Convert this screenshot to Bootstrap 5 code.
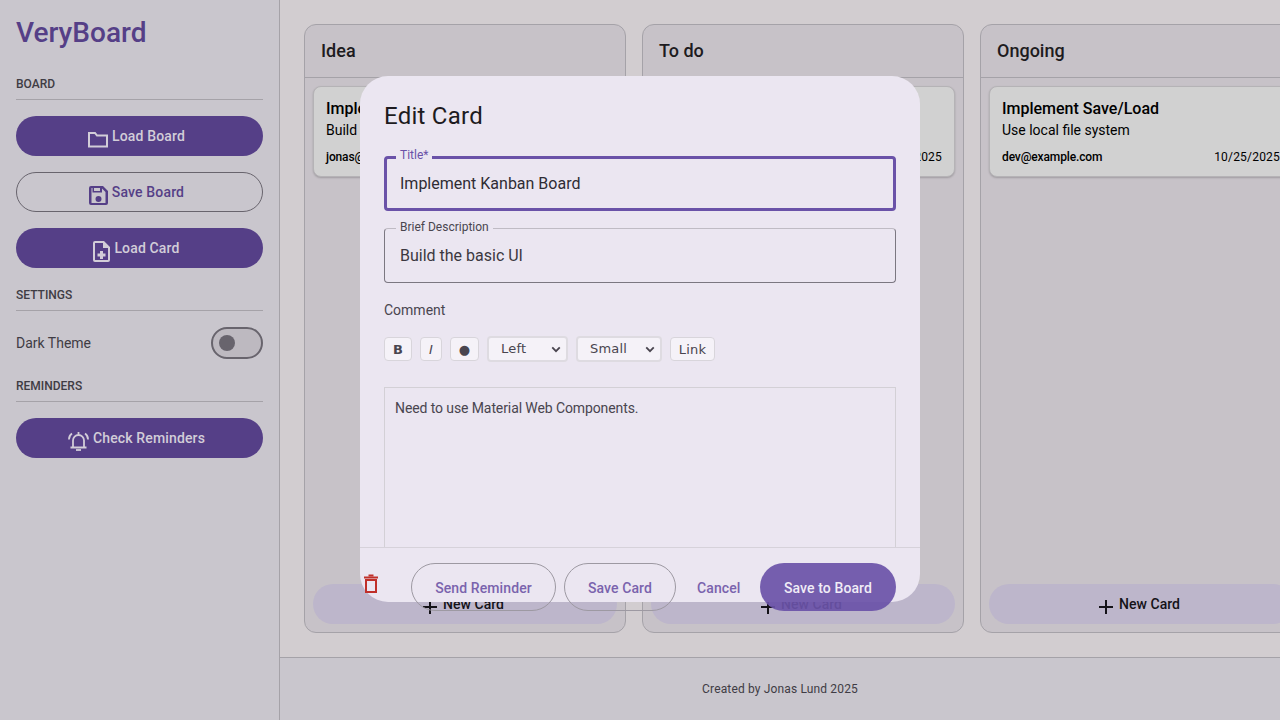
<!DOCTYPE html>
<html lang="en">
<head>
<meta charset="utf-8">
<title>VeryBoard</title>
<link href="https://cdn.jsdelivr.net/npm/bootstrap@5.3.0/dist/css/bootstrap.min.css" rel="stylesheet">
<style>
html,body{height:720px;overflow:hidden;margin:0}
body{font-family:Roboto,"Liberation Sans",sans-serif;background:#d2cdd0;color:#1d1b20}
.vb-shell{height:720px;position:relative;overflow:hidden}
.vb-side{width:280px;flex:none;background:#c9c6cd;border-right:1px solid #a5a2a8;padding:16px}
.vb-brand{font-size:28px;font-weight:500;line-height:33px;color:#553f87;margin:0 0 27px}
.vb-head{font-size:12px;font-weight:500;line-height:16px;color:#3f3c44;text-transform:uppercase;border-bottom:1px solid #a5a2a8;padding-bottom:7px;margin:19px 0 16px}
.vb-pill{height:40px;width:100%;border-radius:20px;font-size:14px;font-weight:500;line-height:20px;padding:0 6px 0 0;margin-bottom:16px;gap:4px;letter-spacing:.15px}
.vb-pill svg{margin-top:6px;flex:none}
.vb-fill,.vb-fill:hover{background:#553f87;color:#d2cdd8;border:0}
.vb-line,.vb-line:hover{background:transparent;color:#553f87;border:1px solid #68646d}
.vb-row{height:32px;margin:0 0 16px;font-size:14px;color:#3f3c44}
.vb-toggle{width:52px;height:32px;border:2px solid #68646d;border-radius:16px;background:#bdb9c0;padding-left:6px}
.vb-thumb{width:16px;height:16px;border-radius:50%;background:#68646d}
.vb-main{min-width:0;flex:1}
.vb-board{flex:1;min-height:0;padding:24px;gap:16px;overflow:hidden;height:657px}
.vb-col{width:322px;flex:none;height:609px;background:#c7c2c8;border:1px solid #a5a2a8;border-radius:12px}
.vb-colhead{height:53px;border-bottom:1px solid #a5a2a8;padding:0 16px;font-size:18px;font-weight:500;line-height:52px;color:#1d1b20}
.vb-cards{padding:8px;flex:1}
.vb-task{height:91px;background:#d1d1d1;border:1px solid #b5b3b6;border-radius:8px;padding:12px 12px 0;box-shadow:0 1px 2px rgba(0,0,0,.2);color:#000}
.vb-tasktitle{font-size:16px;font-weight:500;line-height:20px}
.vb-taskdesc{font-size:14px;line-height:20px;margin-top:1px}
.vb-taskmeta{font-size:12px;line-height:16px;margin-top:9px;letter-spacing:.2px}
.vb-taskmeta b{font-weight:500;letter-spacing:-.13px}
.vb-new,.vb-new:hover{height:40px;margin:0 8px 8px;width:304px;border:0;border-radius:20px;background:#bdb6cb;color:#141218;font-size:14px;font-weight:500;line-height:20px;padding:0 4px 0 0;gap:5px;letter-spacing:.05px}
.vb-new svg{margin-top:5px}
.vb-foot{height:63px;background:#c9c6cd;border-top:1px solid #a5a2a8;font-size:12px;color:#3f3c44;padding-top:23px;line-height:16px;letter-spacing:.15px}
.vb-dialog{position:absolute;left:360px;top:76px;width:560px;height:526px;background:#ebe6f1;border-radius:28px}
.vb-dbody{height:472px;overflow:hidden;padding:24px;border-bottom:1px solid #d6d2da}
.vb-dtitle{font-size:24px;font-weight:400;line-height:32px;color:#1d1b20;margin:0 0 24px;letter-spacing:.25px}
.vb-field{position:relative;height:55px;border:1px solid #7b7781;border-top-color:#bfbbc4;border-radius:4px;padding:0 15px;font-size:16px;line-height:53px;color:#3b3840;margin-bottom:17px}
.vb-field.vb-on{border:3px solid #6a52a8;padding:0 13px;line-height:49px;color:#2f2c34}
.vb-float{position:absolute;left:11px;top:-10px;background:#ebe6f1;padding:0 4px;font-size:12px;line-height:16px;color:#49454f}
.vb-on .vb-float{left:9px;top:-12px;color:#6a52a8}
.vb-label{font-size:14px;line-height:20px;color:#49454f;margin:0 0 16px}
.vb-tools{gap:8px;margin-bottom:25px;height:26px;align-items:center}
.vb-tool{height:24px;padding:0;background-color:#f5f2f8;border:1px solid #d8d5db;border-radius:4px;font-family:"DejaVu Sans",sans-serif;font-size:13px;color:#49454f;line-height:23px;letter-spacing:.2px}
.vb-tool.btn:hover{background-color:#f5f2f8;color:#49454f;border-color:#d8d5db}
select.vb-tool{height:26px;line-height:22px;padding:0 0 0 12px;background-image:url("data:image/svg+xml,%3csvg xmlns='http://www.w3.org/2000/svg' viewBox='0 0 12 8'%3e%3cpath fill='none' stroke='%2349454f' stroke-width='2.200' d='M1.500 1.500 6 6l4.500-4.500'/%3e%3c/svg%3e");background-position:right 5px center;background-size:10px 7px;border-width:2px;border-color:#dedbe1;color:#49454f}
.vb-text{display:block;width:100%;height:220px;background:#ebe6f1;border:1px solid #d3d0d6;border-radius:0;padding:10px;font-size:14px;line-height:20px;color:#49454f;resize:none;letter-spacing:-.1px}
.vb-text:focus{background:#ebe6f1;box-shadow:none;border-color:#d3d0d6;color:#49454f}
.vb-dfoot{height:54px;padding:15px 24px 0 0;overflow:visible}
.vb-trash{margin:11px 0 0 2px;flex:none}
.vb-act,.vb-act:hover{height:48px;border-radius:24px;padding:0;font-size:14px;font-weight:500;line-height:20px;color:#7a63ad;background:transparent;border:1px solid #9d99a2;letter-spacing:.1px}
.vb-act span{position:relative;top:1px}
.vb-flat,.vb-flat:hover{border-color:transparent;width:44px;margin:0 12px}
.vb-prime,.vb-prime:hover{background:rgba(106,82,168,.92);border:0;color:#f0ecf6}
</style>
</head>
<body>
<div class="vb-shell d-flex">
  <aside class="vb-side">
    <h1 class="vb-brand">VeryBoard</h1>
    <div class="vb-head">Board</div>
    <button class="btn vb-pill vb-fill d-flex justify-content-center align-items-center" type="button">
      <svg width="20" height="17" viewBox="0 0 20 17" fill="none" stroke="currentColor" stroke-width="2"><path d="M1 15.500V2h6l2 2.500h10v11z"/></svg>
      <span>Load Board</span>
    </button>
    <button class="btn vb-pill vb-line d-flex justify-content-center align-items-center" type="button">
      <svg width="19" height="19" viewBox="0 0 19 19"><path fill="currentColor" fill-rule="evenodd" d="M2 0h12l5 5v12a2 2 0 0 1-2 2H2a2 2 0 0 1-2-2V2a2 2 0 0 1 2-2zm.5 2v15h14V6l-3.500-3.500V6.500H3.500V2zM5 2v3h6V2zm4.500 8a3 3 0 1 1 0 6 3 3 0 0 1 0-6z"/></svg>
      <span>Save Board</span>
    </button>
    <button class="btn vb-pill vb-fill d-flex justify-content-center align-items-center" type="button">
      <svg width="17" height="21" viewBox="0 0 17 21"><path fill="currentColor" fill-rule="evenodd" d="M2 0h9l6 6v13a2 2 0 0 1-2 2H2a2 2 0 0 1-2-2V2a2 2 0 0 1 2-2zm0 2v17h13V7h-5V2zm5 8h3v2.500h2.500v3H10V18H7v-2.500H4.500v-3H7z"/></svg>
      <span>Load Card</span>
    </button>
    <div class="vb-head">Settings</div>
    <div class="vb-row d-flex align-items-center justify-content-between">
      <span>Dark Theme</span>
      <div class="vb-toggle d-flex align-items-center"><div class="vb-thumb"></div></div>
    </div>
    <div class="vb-head">Reminders</div>
    <button class="btn vb-pill vb-fill d-flex justify-content-center align-items-center" type="button">
      <svg width="21" height="20" viewBox="0 0 21 20" fill="none" stroke="currentColor" stroke-width="1.800"><path d="M5 15.500V9.500a5.500 5.500 0 0 1 11 0v6M2.500 16.500h16"/><path d="M8 19h5"/><path d="M1 8.500A7 7 0 0 1 4 2.500M20 8.500A7 7 0 0 0 17 2.500"/><path d="M10.500 1v2.500"/></svg>
      <span>Check Reminders</span>
    </button>
  </aside>
  <main class="vb-main d-flex flex-column">
    <div class="vb-board d-flex">
      <section class="vb-col d-flex flex-column">
        <div class="vb-colhead">Idea</div>
        <div class="vb-cards">
          <div class="vb-task">
            <div class="vb-tasktitle">Implement Kanban Board</div>
            <div class="vb-taskdesc">Build the basic UI</div>
            <div class="vb-taskmeta d-flex justify-content-between"><b>jonas@example.com</b><span>10/25/2025</span></div>
          </div>
        </div>
        <button class="btn vb-new d-flex justify-content-center align-items-center" type="button"><svg width="16" height="16" viewBox="0 0 16 16" stroke="currentColor" stroke-width="2"><path d="M8 1v14M1 8h14"/></svg><span>New Card</span></button>
      </section>
      <section class="vb-col d-flex flex-column">
        <div class="vb-colhead">To do</div>
        <div class="vb-cards">
          <div class="vb-task">
            <div class="vb-tasktitle">&nbsp;</div>
            <div class="vb-taskdesc">&nbsp;</div>
            <div class="vb-taskmeta d-flex justify-content-end"><span>10/25/2025</span></div>
          </div>
        </div>
        <button class="btn vb-new d-flex justify-content-center align-items-center" type="button"><svg width="16" height="16" viewBox="0 0 16 16" stroke="currentColor" stroke-width="2"><path d="M8 1v14M1 8h14"/></svg><span>New Card</span></button>
      </section>
      <section class="vb-col d-flex flex-column">
        <div class="vb-colhead">Ongoing</div>
        <div class="vb-cards">
          <div class="vb-task">
            <div class="vb-tasktitle">Implement Save/Load</div>
            <div class="vb-taskdesc">Use local file system</div>
            <div class="vb-taskmeta d-flex justify-content-between"><b>dev@example.com</b><span>10/25/2025</span></div>
          </div>
        </div>
        <button class="btn vb-new d-flex justify-content-center align-items-center" type="button"><svg width="16" height="16" viewBox="0 0 16 16" stroke="currentColor" stroke-width="2"><path d="M8 1v14M1 8h14"/></svg><span>New Card</span></button>
      </section>
    </div>
    <footer class="vb-foot text-center">Created by Jonas Lund 2025</footer>
  </main>

  <div class="vb-dialog d-flex flex-column" role="dialog">
    <div class="vb-dbody">
      <h2 class="vb-dtitle">Edit Card</h2>
      <div class="vb-field vb-on"><span class="vb-float">Title*</span>Implement Kanban Board</div>
      <div class="vb-field"><span class="vb-float">Brief Description</span>Build the basic UI</div>
      <div class="vb-label">Comment</div>
      <div class="vb-tools d-flex">
        <button class="btn vb-tool fw-bold" style="width:28px" type="button">B</button>
        <button class="btn vb-tool fst-italic" style="width:22px" type="button">I</button>
        <button class="btn vb-tool" style="width:29px" type="button">●</button>
        <select class="form-select vb-tool" style="width:81px"><option>Left</option></select>
        <select class="form-select vb-tool" style="width:86px"><option>Small</option></select>
        <button class="btn vb-tool" style="width:45px" type="button">Link</button>
      </div>
      <textarea class="form-control vb-text" rows="8">Need to use Material Web Components.</textarea>
    </div>
    <div class="vb-dfoot d-flex align-items-start">
      <svg class="vb-trash" width="18" height="20" viewBox="0 0 18 20" fill="none" stroke="#c0302a" stroke-width="2"><path d="M4 6h10v12H4z"/><path d="M2 3.500h14" stroke-width="2"/><path d="M6.500 1.500h5"/></svg>
      <div class="d-flex ms-auto gap-2">
        <button class="btn vb-act" style="width:145px" type="button"><span>Send Reminder</span></button>
        <button class="btn vb-act" style="width:112px" type="button"><span>Save Card</span></button>
        <button class="btn vb-act vb-flat" type="button"><span>Cancel</span></button>
        <button class="btn vb-act vb-prime" style="width:136px" type="button"><span>Save to Board</span></button>
      </div>
    </div>
  </div>
</div>
<script src="https://cdn.jsdelivr.net/npm/bootstrap@5.3.0/dist/js/bootstrap.bundle.min.js"></script>
</body>
</html>
